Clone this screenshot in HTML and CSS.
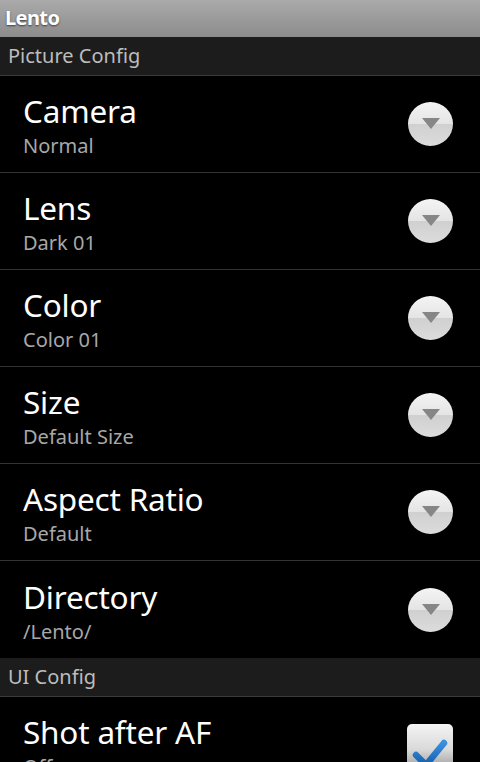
FILE: index.html
```html
<!DOCTYPE html>
<html lang="en">
<head>
    <meta charset="UTF-8">
    <meta name="viewport" content="width=device-width, initial-scale=1.0">
    <title>Lento</title>
    <link rel="stylesheet" href="styles.css">
</head>
<body>

    <div class="titlebar">Lento</div>

    <div class="section">Picture Config</div>

    <div class="row">
        <div class="text">
            <div class="name">Camera</div>
            <div class="value">Normal</div>
        </div>
        <div class="dropdown"><span class="arrow"></span></div>
    </div>
    <div class="row">
        <div class="text">
            <div class="name">Lens</div>
            <div class="value">Dark 01</div>
        </div>
        <div class="dropdown"><span class="arrow"></span></div>
    </div>
    <div class="row">
        <div class="text">
            <div class="name">Color</div>
            <div class="value">Color 01</div>
        </div>
        <div class="dropdown"><span class="arrow"></span></div>
    </div>
    <div class="row">
        <div class="text">
            <div class="name">Size</div>
            <div class="value">Default Size</div>
        </div>
        <div class="dropdown"><span class="arrow"></span></div>
    </div>
    <div class="row">
        <div class="text">
            <div class="name">Aspect Ratio</div>
            <div class="value">Default</div>
        </div>
        <div class="dropdown"><span class="arrow"></span></div>
    </div>
    <div class="row last">
        <div class="text">
            <div class="name">Directory</div>
            <div class="value">/Lento/</div>
        </div>
        <div class="dropdown"><span class="arrow"></span></div>
    </div>

    <div class="section">UI Config</div>

    <div class="row">
        <div class="text">
            <div class="name">Shot after AF</div>
            <div class="value">Off</div>
        </div>
        <div class="checkbox">
            <svg width="36" height="32" viewBox="0 0 36 32">
                <defs>
                    <linearGradient id="tick" x1="0" y1="0" x2="0" y2="1">
                        <stop offset="0" stop-color="#3b8fe0"/>
                        <stop offset="1" stop-color="#1360ac"/>
                    </linearGradient>
                </defs>
                <path d="M4 17 L14 27 L32 5" fill="none" stroke="url(#tick)" stroke-width="6.5" stroke-linecap="round" stroke-linejoin="round"/>
            </svg>
        </div>
    </div>

</body>
</html>
```

FILE: styles.css
```css
body {
    font-family: "Noto Sans", "Open Sans", sans-serif;
    background-color: #000;
    margin: 0;
    overflow: hidden;
}
.titlebar {
    height: 37px;
    line-height: 36px;
    padding-left: 5px;
    background: linear-gradient(#aaaaaa, #8c8c8c);
    color: #fff;
    font-size: 20px;
    font-weight: bold;
    letter-spacing: -0.6px;
    text-shadow: 0 1px 2px rgba(0, 0, 0, 0.6);
}
.section {
    height: 38px;
    line-height: 38px;
    padding-left: 8px;
    background-color: #1c1c1c;
    border-bottom: 1px solid #3a3a3a;
    color: #bdbdbd;
    font-size: 20px;
}
.row {
    height: 96px;
    display: flex;
    align-items: center;
    justify-content: space-between;
    border-bottom: 1px solid #333;
    padding: 0 27px 0 23px;
}
.row.last {
    border-bottom: none;
    height: 97px;
}
.text {
    margin-top: 4px;
}
.name {
    color: #fff;
    font-size: 31.5px;
    line-height: 40px;
    letter-spacing: -0.2px;
}
.value {
    color: #a8a8a8;
    font-size: 20px;
    line-height: 30px;
}
.dropdown {
    width: 45px;
    height: 44px;
    border-radius: 50%;
    background: linear-gradient(#f4f4f4, #e4e4e4 50%, #d0d0d0 51%, #dcdcdc);
    box-shadow: 0 1px 2px rgba(0, 0, 0, 0.6);
    display: flex;
    align-items: center;
    justify-content: center;
}
.arrow {
    width: 0;
    height: 0;
    margin-top: -1px;
    border-left: 9px solid transparent;
    border-right: 9px solid transparent;
    border-top: 11px solid #868686;
}
.checkbox {
    width: 46px;
    height: 46px;
    margin-top: 4px;
    border-radius: 5px;
    background: linear-gradient(#f4f4f4, #dadada 55%, #9a9a9a);
    display: flex;
    align-items: flex-end;
    justify-content: center;
}
```
